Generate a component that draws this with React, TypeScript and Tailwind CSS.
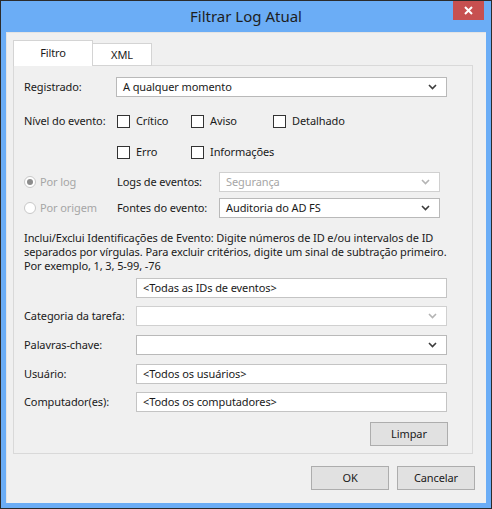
import { FC, ReactNode } from "react";

const Chevron: FC<{ disabled?: boolean }> = ({ disabled }) => (
    <svg width="9" height="6" viewBox="0 0 9 6" className="shrink-0">
        <polyline
            points="1,1 4.5,4.5 8,1"
            fill="none"
            stroke={disabled ? "#b4b4b4" : "#3c3c3c"}
            strokeWidth="1.6"
        />
    </svg>
);

const Select: FC<{ value?: string; disabled?: boolean; className?: string }> = ({
    value,
    disabled,
    className,
}) => (
    <div
        className={`h-[20px] flex items-center justify-between pl-[6px] pr-[9px] border bg-white ${
            disabled ? "border-[#d0d0d0] text-[#a6a6a6]" : "border-[#b9b9b9] text-[#1a1a1a]"
        } ${className ?? ""}`}
    >
        <span>{value}</span>
        <Chevron disabled={disabled} />
    </div>
);

const TextBox: FC<{ value?: string }> = ({ value }) => (
    <div className="h-[20px] w-[311px] flex items-center pl-[6px] border border-[#c4c4c4] bg-white">
        {value}
    </div>
);

const Check: FC<{ label: string; className?: string }> = ({ label, className }) => (
    <div className={`flex items-center gap-[6px] ${className ?? ""}`}>
        <span className="w-[13px] h-[13px] border border-[#333] bg-white shrink-0" />
        <span>{label}</span>
    </div>
);

const Radio: FC<{ label: string; checked?: boolean }> = ({ label, checked }) => (
    <div className="w-[93px] flex items-center gap-[4px] text-[#a6a6a6]">
        <span className="w-[12px] h-[12px] rounded-full border border-[#c8c8c8] bg-white flex items-center justify-center shrink-0">
            {checked && <span className="w-[6px] h-[6px] rounded-full bg-[#8c8c8c]" />}
        </span>
        <span>{label}</span>
    </div>
);

const Row: FC<{ label: string; className?: string; children: ReactNode }> = ({
    label,
    className,
    children,
}) => (
    <div className={`flex items-center h-[20px] ${className ?? ""}`}>
        <span className="w-[112px] shrink-0">{label}</span>
        {children}
    </div>
);

const Button: FC<{ label: string; className?: string }> = ({ label, className }) => (
    <div
        className={`h-[24px] w-[78px] flex items-center justify-center bg-[#e1e1e1] border border-[#adadad] ${
            className ?? ""
        }`}
    >
        {label}
    </div>
);

export default function App() {
    return (
        <div className="w-[492px] h-[509px] bg-[#6badf6] border border-[#2b2b2b] flex flex-col font-['Noto_Sans',sans-serif] text-[11px] leading-[14px] tracking-[-0.1px] text-[#1a1a1a]">
            {/* title bar */}
            <div className="relative h-[31px] shrink-0 flex items-center justify-center">
                <span className="text-[15px] tracking-normal text-[#1e1e1e] pb-[1px]">Filtrar Log Atual</span>
                <div className="absolute right-[7px] top-0 w-[31px] h-[19px] bg-[#c75050] flex items-center justify-center">
                    <svg width="9" height="9" viewBox="0 0 9 9">
                        <path d="M1 1 L8 8 M8 1 L1 8" stroke="white" strokeWidth="2" />
                    </svg>
                </div>
            </div>

            {/* client area */}
            <div className="flex-1 mx-[5px] mb-[5px] bg-[#f0f0f0] border-t border-l border-[#e4e4e4] pl-[6px] pt-[7px] pr-[12px] flex flex-col">
                {/* tabs */}
                <div className="flex items-end h-[26px] -mb-px relative z-10">
                    <div className="w-[80px] h-[26px] bg-white border border-b-0 border-[#d4d4d4] flex items-center justify-center pb-[1px]">
                        Filtro
                    </div>
                    <div className="w-[59px] h-[23px] bg-white border border-l-0 border-[#d4d4d4] flex items-center justify-center">
                        XML
                    </div>
                </div>

                {/* tab panel */}
                <div className="h-[389px] w-[460px] border border-[#d9d9d9] bg-[#f0f0f0] pl-[10px] pr-[25px] flex flex-col">
                    <div className="flex items-center h-[20px] mt-[11px]">
                        <span className="w-[92px] shrink-0">Registrado:</span>
                        <Select value="A qualquer momento" className="flex-1" />
                    </div>

                    <div className="flex items-center h-[20px] mt-[14px]">
                        <span className="w-[93px] shrink-0">Nível do evento:</span>
                        <Check label="Crítico" className="w-[74px]" />
                        <Check label="Aviso" className="w-[82px]" />
                        <Check label="Detalhado" />
                    </div>

                    <div className="flex items-center h-[20px] mt-[11px] pl-[93px]">
                        <Check label="Erro" className="w-[74px]" />
                        <Check label="Informações" />
                    </div>

                    <div className="flex items-center h-[20px] mt-[10px]">
                        <Radio label="Por log" checked />
                        <span className="w-[102px] shrink-0">Logs de eventos:</span>
                        <Select value="Segurança" disabled className="w-[221px]" />
                    </div>

                    <div className="flex items-center h-[20px] mt-[6px]">
                        <Radio label="Por origem" />
                        <span className="w-[102px] shrink-0">Fontes do evento:</span>
                        <Select value="Auditoria do AD FS" className="w-[221px]" />
                    </div>

                    <p className="mt-[13px] -mr-[20px] whitespace-nowrap">
                        Inclui/Exclui Identificações de Evento: Digite números de ID e/ou intervalos de ID
                        <br />
                        separados por vírgulas. Para excluir critérios, digite um sinal de subtração primeiro.
                        <br />
                        Por exemplo, 1, 3, 5-99, -76
                    </p>

                    <Row label="" className="mt-[5px]">
                        <TextBox value="<Todas as IDs de eventos>" />
                    </Row>
                    <Row label="Categoria da tarefa:" className="mt-[8px]">
                        <Select disabled className="w-[311px] border-[#c4c4c4]" />
                    </Row>
                    <Row label="Palavras-chave:" className="mt-[9px]">
                        <Select className="w-[311px]" />
                    </Row>
                    <Row label="Usuário:" className="mt-[9px]">
                        <TextBox value="<Todos os usuários>" />
                    </Row>
                    <Row label="Computador(es):" className="mt-[8px]">
                        <TextBox value="<Todos os computadores>" />
                    </Row>

                    <div className="flex justify-end mt-[10px] -mr-px">
                        <Button label="Limpar" className="w-[77px] h-[23px]" />
                    </div>
                </div>

                {/* dialog buttons */}
                <div className="flex justify-end gap-[8px] mt-[12px] -mr-px">
                    <Button label="OK" />
                    <Button label="Cancelar" />
                </div>
            </div>
        </div>
    );
}
